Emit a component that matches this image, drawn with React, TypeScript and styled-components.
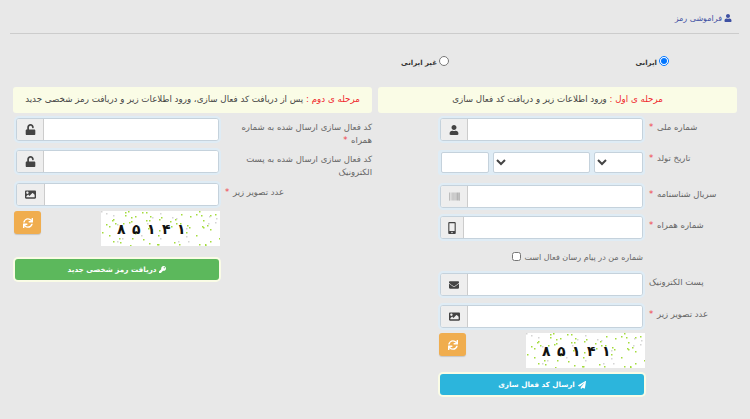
import styled, { createGlobalStyle } from "styled-components";
import {
  FaUser,
  FaBarcode,
  FaMobileAlt,
  FaEnvelope,
  FaImage,
  FaUnlock,
  FaSync,
  FaPaperPlane,
  FaKey,
} from "react-icons/fa";

const GlobalStyle = createGlobalStyle`
  html, body {
    margin: 0;
    padding: 0;
    background: #e8e8e8;
    font-family: "DejaVu Sans", "Noto Sans", sans-serif;
  }
`;

// noise dots of the captcha, fixed seed so every render is the same
const captchaDots = Array.from({ length: 90 }, (_, i) => ({
  x: (i * 47 + (i * i) % 31) % 119,
  y: (i * 29 + (i * i * 3) % 17) % 35,
  c: i % 4 === 0 ? "#d4d4d4" : "#a4dc3c",
}));

const captchaDigits = ["۸", "۵", "۱", "۴", "۱"];

const Captcha = () => (
  <CaptchaBox>
    <svg width="119" height="35" viewBox="0 0 119 35">
      {captchaDots.map((d, i) => (
        <rect key={i} x={d.x} y={d.y} width="1.5" height="1.5" fill={d.c} />
      ))}
    </svg>
    <CaptchaText>
      {captchaDigits.map((d, i) => (
        <span key={i}>{d}</span>
      ))}
    </CaptchaText>
  </CaptchaBox>
);

const App = () => {
  return (
    <Page dir="rtl">
      <GlobalStyle />
      <Header>
        <FaUser size={8} />
        <span>فراموشی رمز</span>
      </Header>
      <RadioRow>
        <RadioItem $width={220}>
          <input type="radio" name="nat" defaultChecked />
          <b>ایرانی</b>
        </RadioItem>
        <RadioItem>
          <input type="radio" name="nat" />
          <b>غیر ایرانی</b>
        </RadioItem>
      </RadioRow>

      <Columns>
        <Column>
          <Alert>
            <em>مرحله ی اول :</em> ورود اطلاعات زیر و دریافت کد فعال سازی
          </Alert>
          <Row $labelWidth={88} $after={7}>
            <Label>
              شماره ملی <Star>*</Star>
            </Label>
            <Field>
              <Addon $width={26}>
                <FaUser size={10} color="#444" />
              </Addon>
              <Input />
            </Field>
          </Row>
          <Row $labelWidth={88} $after={8} $short>
            <Label $top={1}>
              تاریخ تولد <Star>*</Star>
            </Label>
            <DateField>
              <Select $width={49}>
                <option></option>
              </Select>
              <Select $width={98}>
                <option></option>
              </Select>
              <DateInput />
            </DateField>
          </Row>
          <Row $labelWidth={88} $after={4}>
            <Label>
              سریال شناسنامه <Star>*</Star>
            </Label>
            <Field>
              <Addon $width={26}>
                <FaBarcode size={11} color="#999" />
              </Addon>
              <Input />
            </Field>
          </Row>
          <Row $labelWidth={88} $after={0}>
            <Label>
              شماره همراه <Star>*</Star>
            </Label>
            <Field>
              <Addon $width={22}>
                <FaMobileAlt size={12} color="#444" />
              </Addon>
              <Input />
            </Field>
          </Row>
          <CheckRow>
            <span>شماره من در پیام رسان فعال است</span>
            <input type="checkbox" />
          </CheckRow>
          <Row $labelWidth={88} $after={5}>
            <Label>پست الکترونیک</Label>
            <Field>
              <Addon $width={26}>
                <FaEnvelope size={10} color="#444" />
              </Addon>
              <Input />
            </Field>
          </Row>
          <Row $labelWidth={88} $after={3}>
            <Label>
              عدد تصویر زیر <Star>*</Star>
            </Label>
            <Field>
              <Addon $width={26}>
                <FaImage size={11} color="#444" />
              </Addon>
              <Input />
            </Field>
          </Row>
          <ActionArea $labelWidth={92}>
            <CaptchaRow>
              <Captcha />
              <RefreshButton type="button">
                <FaSync size={10} />
              </RefreshButton>
            </CaptchaRow>
            <SubmitButton type="button" $color="#2cb5dc" $top={6}>
              <FaPaperPlane size={8} />
              <span>ارسال کد فعال سازی</span>
            </SubmitButton>
          </ActionArea>
        </Column>

        <Column>
          <Alert>
            <em>مرحله ی دوم :</em> پس از دریافت کد فعال سازی، ورود اطلاعات زیر و
            دریافت رمز شخصی جدید
          </Alert>
          <Row $labelWidth={147} $after={5}>
            <Label $wrap>
              کد فعال سازی ارسال شده به شماره همراه <Star>*</Star>
            </Label>
            <Field>
              <Addon $width={26}>
                <FaUnlock size={11} color="#444" />
              </Addon>
              <Input />
            </Field>
          </Row>
          <Row $labelWidth={147} $after={6}>
            <Label $wrap>کد فعال سازی ارسال شده به پست الکترونیک</Label>
            <Field>
              <Addon $width={26}>
                <FaUnlock size={11} color="#444" />
              </Addon>
              <Input />
            </Field>
          </Row>
          <Row $labelWidth={147} $after={3}>
            <Label>
              عدد تصویر زیر <Star>*</Star>
            </Label>
            <Field>
              <Addon $width={27}>
                <FaImage size={11} color="#444" />
              </Addon>
              <Input />
            </Field>
          </Row>
          <ActionArea $labelWidth={152}>
            <CaptchaRow>
              <Captcha />
              <RefreshButton type="button">
                <FaSync size={10} />
              </RefreshButton>
            </CaptchaRow>
            <SubmitButton type="button" $color="#5cb85c" $top={13}>
              <FaKey size={7} />
              <span>دریافت رمز شخصی جدید</span>
            </SubmitButton>
          </ActionArea>
        </Column>
      </Columns>
    </Page>
  );
};

export default App;

const Page = styled.div`
  width: 750px;
  height: 419px;
  overflow: hidden;
  background: #e8e8e8;
  color: #555;
  font-size: 10px;
`;

const Header = styled.div`
  margin: 0 11px 0 10px;
  height: 34px;
  padding: 12px 7px 0 0;
  box-sizing: border-box;
  border-bottom: 1px solid #ccc;
  display: flex;
  align-items: flex-start;
  gap: 2px;
  color: #3f51a3;
  font-size: 8px;
  line-height: 13px;
  svg {
    margin-top: 2px;
  }
`;

const RadioRow = styled.div`
  display: flex;
  height: 53px;
  padding: 21px 81px 0 0;
  box-sizing: border-box;
  color: #333;
`;

const RadioItem = styled.label<{ $width?: number }>`
  display: flex;
  align-items: flex-start;
  gap: 2px;
  width: ${(p) => (p.$width ? `${p.$width}px` : "auto")};
  font-size: 7px;
  line-height: 15px;
  input {
    margin: 0;
    width: 10px;
    height: 10px;
    margin-top: 1px;
  }
  b {
    margin-top: 1px;
  }
`;

const Columns = styled.div`
  display: flex;
  gap: 6px;
  padding: 0 13px 0 13px;
`;

const Column = styled.div`
  width: 359px;
  flex-shrink: 0;
`;

const Alert = styled.div`
  height: 26px;
  margin-bottom: 3px;
  border-radius: 3px;
  background: #fafce6;
  color: #444;
  font-size: 8.7px;
  line-height: 25px;
  text-align: center;
  white-space: nowrap;
  em {
    font-style: normal;
    color: #f0262c;
  }
`;

const Row = styled.div<{ $labelWidth: number; $after: number; $short?: boolean }>`
  display: flex;
  gap: 4px;
  height: ${(p) => (p.$short ? 25 : 27)}px;
  margin-bottom: ${(p) => p.$after}px;
  > label {
    width: ${(p) => p.$labelWidth}px;
  }
`;

const Label = styled.label<{ $wrap?: boolean; $top?: number }>`
  flex-shrink: 0;
  padding-top: ${(p) => (p.$top !== undefined ? p.$top : p.$wrap ? 5 : 4)}px;
  color: #666;
  font-size: 8.5px;
  line-height: ${(p) => (p.$wrap ? 13 : 15)}px;
  text-align: ${(p) => (p.$wrap ? "right" : "left")};
`;

const Star = styled.span`
  color: #f0434a;
  margin-right: 1px;
`;

const Field = styled.div`
  width: 201px;
  height: 21px;
  display: flex;
  flex-direction: row-reverse;
  margin: 2px;
  border: 1px solid #c5d2dc;
  border-radius: 3px;
  box-shadow: 0 0 0 2px #dfecf5;
  overflow: hidden;
  background: #fff;
`;

const Addon = styled.span<{ $width: number }>`
  width: ${(p) => p.$width}px;
  flex-shrink: 0;
  display: flex;
  align-items: center;
  justify-content: center;
  background: #eee;
  border-right: 1px solid #ccc;
`;

const Input = styled.input`
  flex: 1;
  min-width: 0;
  border: 0;
  outline: 0;
  padding: 0;
  background: #fff;
`;

const DateField = styled.div`
  width: 207px;
  height: 25px;
  box-sizing: border-box;
  display: flex;
  align-items: center;
  gap: 4px;
  padding: 0 2px 0 3px;
  background: #dfecf5;
  border-radius: 3px;
`;

const Select = styled.select<{ $width: number }>`
  width: ${(p) => p.$width}px;
  height: 21px;
  box-sizing: border-box;
  border: 1px solid #c5d2dc;
  border-radius: 2px;
  background-color: #fff;
  color: #444;
  font-size: 6px;
  outline: 0;
`;

const DateInput = styled.input`
  width: 48px;
  height: 21px;
  box-sizing: border-box;
  border: 1px solid #c5d2dc;
  border-radius: 2px;
  padding: 0;
  background: #fff;
  outline: 0;
`;

const CheckRow = styled.label`
  display: flex;
  align-items: center;
  gap: 3px;
  height: 30px;
  padding: 2px 94px 0 0;
  box-sizing: border-box;
  color: #666;
  font-size: 8px;
  input {
    margin: 0 0 2px;
    width: 9px;
    height: 9px;
  }
`;

const ActionArea = styled.div<{ $labelWidth: number }>`
  margin-right: ${(p) => p.$labelWidth}px;
  width: 206px;
`;

const CaptchaRow = styled.div`
  display: flex;
  align-items: flex-start;
  justify-content: space-between;
`;

const CaptchaBox = styled.div`
  position: relative;
  width: 119px;
  height: 35px;
  background: #fff;
  svg {
    display: block;
  }
`;

const CaptchaText = styled.div`
  position: absolute;
  top: 0;
  left: 16px;
  display: flex;
  direction: ltr;
  color: #111;
  font-size: 14px;
  font-weight: bold;
  line-height: 37px;
  span {
    width: 15px;
  }
`;

const RefreshButton = styled.button`
  width: 27px;
  height: 23px;
  padding: 0;
  border: 0;
  border-radius: 3px;
  background: #f0ad4e;
  color: #fff;
  display: flex;
  align-items: center;
  justify-content: center;
  box-shadow: 0 1px 1px rgba(0, 0, 0, 0.15);
`;

const SubmitButton = styled.button<{ $color: string; $top: number }>`
  width: 204px;
  height: 21px;
  margin: ${(p) => p.$top}px 1px 0 1px;
  padding: 0;
  border: 0;
  border-radius: 3px;
  background: ${(p) => p.$color};
  box-shadow: 0 0 0 2px #fafce6;
  color: #fff;
  font-family: "DejaVu Sans", sans-serif;
  font-size: 7.2px;
  font-weight: bold;
  display: flex;
  align-items: center;
  justify-content: center;
  gap: 3px;
`;
